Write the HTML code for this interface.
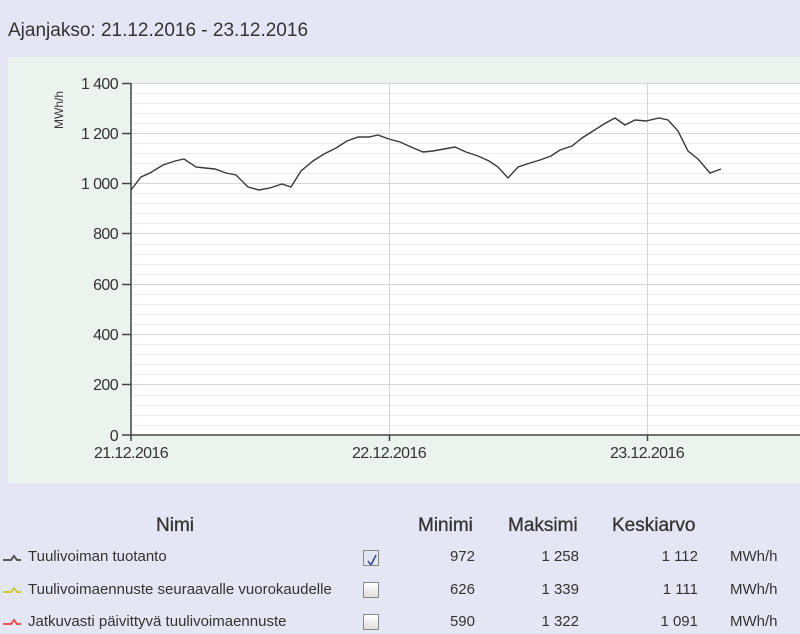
<!DOCTYPE html>
<html><head><meta charset="utf-8"><style>
body{margin:0;width:800px;height:634px;background:#e4e6f3;font-family:"Liberation Sans",sans-serif;color:#333;position:relative;overflow:hidden}
.a{position:absolute;white-space:nowrap}
.h{font-size:19px;color:#333;font-weight:500;-webkit-text-stroke:0.3px #333}
.r{font-size:15px;color:#333}
.n{text-align:right;width:80px}
.cb{position:absolute;width:14px;height:14px;border:1px solid #888;background:linear-gradient(#fff,#ddd);left:363px}
</style></head><body>
<div class="a" style="left:8px;top:20px;font-size:19px;color:#333">Ajanjakso: 21.12.2016 - 23.12.2016</div>
<svg class="a" style="left:0;top:0" width="800" height="634">
<rect x="8" y="57" width="792" height="426" fill="#ebf3ef"/>
<rect x="131" y="83" width="669" height="352" fill="#fff"/>
<g stroke="#ececec" stroke-width="1">
<line x1="131" x2="800" y1="93.5" y2="93.5"/><line x1="131" x2="800" y1="103.5" y2="103.5"/><line x1="131" x2="800" y1="113.5" y2="113.5"/><line x1="131" x2="800" y1="123.5" y2="123.5"/>
<line x1="131" x2="800" y1="143.5" y2="143.5"/><line x1="131" x2="800" y1="153.5" y2="153.5"/><line x1="131" x2="800" y1="163.5" y2="163.5"/><line x1="131" x2="800" y1="173.5" y2="173.5"/>
<line x1="131" x2="800" y1="193.5" y2="193.5"/><line x1="131" x2="800" y1="203.5" y2="203.5"/><line x1="131" x2="800" y1="213.5" y2="213.5"/><line x1="131" x2="800" y1="223.5" y2="223.5"/>
<line x1="131" x2="800" y1="244.5" y2="244.5"/><line x1="131" x2="800" y1="254.5" y2="254.5"/><line x1="131" x2="800" y1="264.5" y2="264.5"/><line x1="131" x2="800" y1="274.5" y2="274.5"/>
<line x1="131" x2="800" y1="294.5" y2="294.5"/><line x1="131" x2="800" y1="304.5" y2="304.5"/><line x1="131" x2="800" y1="314.5" y2="314.5"/><line x1="131" x2="800" y1="324.5" y2="324.5"/>
<line x1="131" x2="800" y1="344.5" y2="344.5"/><line x1="131" x2="800" y1="354.5" y2="354.5"/><line x1="131" x2="800" y1="364.5" y2="364.5"/><line x1="131" x2="800" y1="374.5" y2="374.5"/>
<line x1="131" x2="800" y1="395.5" y2="395.5"/><line x1="131" x2="800" y1="405.5" y2="405.5"/><line x1="131" x2="800" y1="415.5" y2="415.5"/><line x1="131" x2="800" y1="425.5" y2="425.5"/>
</g>
<g stroke="#d6d6d6" stroke-width="1">
<line x1="131" x2="800" y1="83.5" y2="83.5"/><line x1="131" x2="800" y1="133.5" y2="133.5"/><line x1="131" x2="800" y1="183.5" y2="183.5"/><line x1="131" x2="800" y1="233.5" y2="233.5"/><line x1="131" x2="800" y1="284.5" y2="284.5"/><line x1="131" x2="800" y1="334.5" y2="334.5"/><line x1="131" x2="800" y1="384.5" y2="384.5"/>
<line x1="389.5" x2="389.5" y1="83" y2="435"/><line x1="647.5" x2="647.5" y1="83" y2="435"/>
</g>
<g stroke="#444" stroke-width="1.5" fill="none">
<line x1="131" x2="131" y1="83" y2="436"/><line x1="131" x2="800" y1="435" y2="435"/>
<line x1="122" x2="131" y1="83.5" y2="83.5"/><line x1="122" x2="131" y1="133.5" y2="133.5"/><line x1="122" x2="131" y1="183.5" y2="183.5"/><line x1="122" x2="131" y1="233.5" y2="233.5"/><line x1="122" x2="131" y1="284.5" y2="284.5"/><line x1="122" x2="131" y1="334.5" y2="334.5"/><line x1="122" x2="131" y1="384.5" y2="384.5"/><line x1="122" x2="131" y1="435" y2="435"/>
<line x1="131" x2="131" y1="435" y2="441"/><line x1="389.5" x2="389.5" y1="435" y2="441"/><line x1="647.5" x2="647.5" y1="435" y2="441"/>
<polyline stroke="#3a3a3a" stroke-width="1.4" points="131,190 141,177 150,173 163,165 175,161 184,159 196,167 205,168 215,169 226,173 236,175 248,187 259,190 270,188 282,184 291,187 301,171 313,161 324,154 336,148 347,141 358,137 369,137 378,135 389,139 400,142 411,147 423,152 433,151 444,149 455,147 466,152 478,156 489,161 498,167 508,178 518,167 530,163 540,160 551,156 560,150 572,146 582,138 593,131 604,124 615,118 625,125 635,120 646,121 659,118 668,120 678,131 688,151 698,159 710,173 721,169"/>
</g>
<g font-family="Liberation Sans,sans-serif" font-size="16" fill="#333" text-anchor="end" letter-spacing="-0.6">
<text x="118" y="89">1 400</text><text x="118" y="139">1 200</text><text x="118" y="189">1 000</text><text x="118" y="239">800</text><text x="118" y="290">600</text><text x="118" y="340">400</text><text x="118" y="390">200</text><text x="118" y="441">0</text>
</g>
<g font-family="Liberation Sans,sans-serif" font-size="16" fill="#333" text-anchor="middle" letter-spacing="-0.6">
<text x="131" y="458">21.12.2016</text><text x="389" y="458">22.12.2016</text><text x="647" y="458">23.12.2016</text>
</g>
<text transform="translate(63,110) rotate(-90)" text-anchor="middle" font-family="Liberation Sans,sans-serif" font-size="12" fill="#333">MWh/h</text>
<g stroke-width="2" fill="none">
<polyline stroke="#555" points="3,560 11,560 14,556 17,560 21,560"/>
<polyline stroke="#c8cc3a" points="3,592 11,592 14,588 17,592 21,592"/>
<polyline stroke="#e85050" points="3,624 11,624 14,620 17,624 21,624"/>
</g>
<polyline points="368,561 371,565 376,555" stroke="#3a4fa0" stroke-width="1.6" fill="none"/>
</svg>
<div class="a h" style="left:156px;top:515px">Nimi</div>
<div class="a h" style="left:418px;top:515px">Minimi</div>
<div class="a h" style="left:508px;top:515px">Maksimi</div>
<div class="a h" style="left:612px;top:515px">Keskiarvo</div>
<div class="a r" style="left:28px;top:548px">Tuulivoiman tuotanto</div>
<div class="a r" style="left:28px;top:581px">Tuulivoimaennuste seuraavalle vuorokaudelle</div>
<div class="a r" style="left:28px;top:613px">Jatkuvasti päivittyvä tuulivoimaennuste</div>
<div class="cb" style="top:550px;background:transparent"></div>
<div class="cb" style="top:582px"></div>
<div class="cb" style="top:614px"></div>
<div class="a r n" style="left:395px;top:548px">972</div>
<div class="a r n" style="left:499px;top:548px">1 258</div>
<div class="a r n" style="left:618px;top:548px">1 112</div>
<div class="a r" style="left:730px;top:548px">MWh/h</div>
<div class="a r n" style="left:395px;top:581px">626</div>
<div class="a r n" style="left:499px;top:581px">1 339</div>
<div class="a r n" style="left:618px;top:581px">1 111</div>
<div class="a r" style="left:730px;top:581px">MWh/h</div>
<div class="a r n" style="left:395px;top:613px">590</div>
<div class="a r n" style="left:499px;top:613px">1 322</div>
<div class="a r n" style="left:618px;top:613px">1 091</div>
<div class="a r" style="left:730px;top:613px">MWh/h</div>
</body></html>
